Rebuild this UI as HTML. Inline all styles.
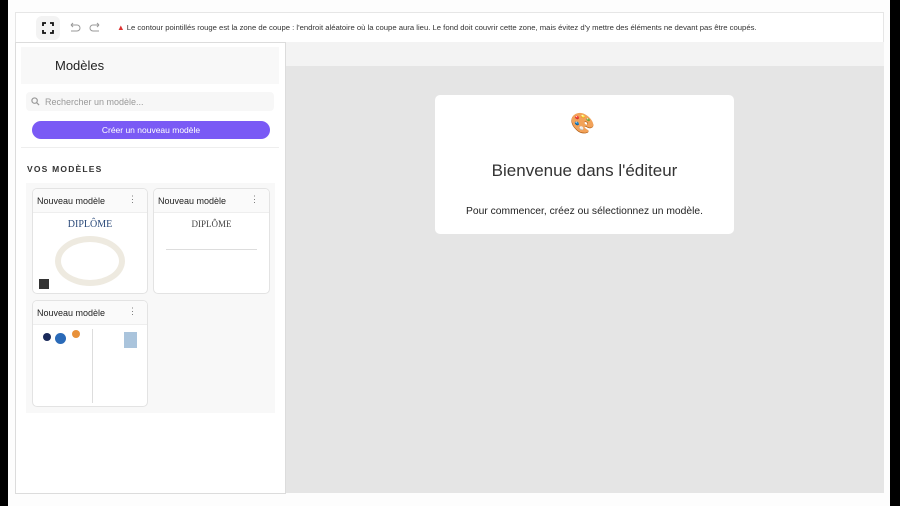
<!DOCTYPE html>
<html><head><meta charset="utf-8"><style>
*{box-sizing:border-box;margin:0;padding:0}
body{width:900px;height:506px;overflow:hidden;background:#fdfdfd;font-family:"Liberation Sans",sans-serif;position:relative;color:#222}
.blk{position:absolute;top:0;bottom:0;background:#000}
.tb{position:absolute;left:15px;top:12px;width:869px;height:31px;border:1px solid #e6e6e6;background:#fff}
.fs{position:absolute;left:20px;top:3px;width:24px;height:24px;background:#f3f3f3;border-radius:6px}
.warn{position:absolute;left:101px;top:10px;font-size:7.7px;color:#333;white-space:nowrap}
.side{position:absolute;left:15px;top:42px;width:271px;height:452px;border:1px solid #dcdcdc;background:#fff}
.main{position:absolute;left:286px;top:42px;width:598px;height:451px;background:#f3f3f3}
.gray{position:absolute;left:286px;top:66px;width:598px;height:427px;background:#e5e5e5}
.card{position:absolute;left:435px;top:95px;width:299px;height:139px;background:#fff;border-radius:5px;text-align:center}
.tile{position:absolute;background:#fff;border:1px solid #e3e3e3;border-radius:5px;overflow:hidden}
.tile .h{height:24px;border-bottom:1px solid #eee;font-size:9px;padding:7px 0 0 4px;position:relative;background:#fafafa}
.tile .h span{position:absolute;right:10px;top:5px;font-size:9px;color:#777}
</style></head><body>
<div class="blk" style="left:0;width:8px"></div>
<div class="blk" style="left:890px;width:10px"></div>
<div class="tb">
 <div class="fs"><svg width="24" height="24" viewBox="0 0 24 24" fill="none" stroke="#111" stroke-width="1.8"><path d="M7 10V7h3M14 7h3v3M17 14v3h-3M10 17H7v-3"/></svg></div>
 <svg style="position:absolute;left:52px;top:9px" width="36" height="12" viewBox="0 0 36 12" fill="none" stroke="#999" stroke-width="1"><path d="M3 3h6a3 3 0 0 1 0 6H3M3 3l2-2M3 3l2 2M31 3h-6a3 3 0 0 0 0 6h6M31 3l-2-2M31 3l-2 2"/></svg>
 <div class="warn"><span style="color:#d33">▲</span> Le contour pointillés rouge est la zone de coupe : l'endroit aléatoire où la coupe aura lieu. Le fond doit couvrir cette zone, mais évitez d'y mettre des éléments ne devant pas être coupés.</div>
</div>
<div class="side">
 <div style="position:absolute;left:5px;top:4px;width:258px;height:37px;background:#f8f8f8"></div>
 <div style="position:absolute;left:39px;top:15px;font-size:13px;color:#222">Modèles</div>
 <div style="position:absolute;left:10px;top:49px;width:248px;height:19px;background:#f7f7f7;border-radius:4px;font-size:9px;color:#999;padding:5px 0 0 19px">Rechercher un modèle...<svg style="position:absolute;left:5px;top:5px" width="9" height="9" viewBox="0 0 10 10" fill="none" stroke="#999" stroke-width="1.3"><circle cx="4" cy="4" r="3"/><path d="M6.3 6.3L9 9"/></svg></div>
 <div style="position:absolute;left:16px;top:78px;width:238px;height:18px;background:#7a5af5;border-radius:9px;color:#fff;font-size:8.5px;text-align:center;line-height:18px">Créer un nouveau modèle</div>
 <div style="position:absolute;left:5px;top:104px;width:258px;border-top:1px solid #eee"></div>
 <div style="position:absolute;left:11px;top:121px;font-size:8.5px;font-weight:bold;letter-spacing:1.2px;color:#333">VOS MODÈLES</div>
 <div style="position:absolute;left:10px;top:140px;width:249px;height:230px;background:#f8f8f8"></div>
 <div class="tile" style="left:16px;top:145px;width:116px;height:106px"><div class="h">Nouveau modèle<span>⋮</span></div>
  <div style="text-align:center;font-family:'Liberation Serif',serif;color:#2b4a7a;font-size:10px;margin-top:6px">DIPLÔME</div>
  <div style="margin:6px auto;width:70px;height:50px;border-radius:50%;border:6px solid #eeeae0"></div>
  <div style="position:absolute;left:6px;top:90px;width:10px;height:10px;background:#333"></div></div>
 <div class="tile" style="left:137px;top:145px;width:117px;height:106px"><div class="h">Nouveau modèle<span>⋮</span></div>
  <div style="text-align:center;font-family:'Liberation Serif',serif;color:#444;font-size:9px;margin-top:6px">DIPLÔME</div>
  <div style="margin:20px 12px 0;border-top:1px solid #ddd"></div></div>
 <div class="tile" style="left:16px;top:257px;width:116px;height:107px"><div class="h">Nouveau modèle<span>⋮</span></div>
  <div style="position:absolute;left:10px;top:32px;width:8px;height:8px;border-radius:50%;background:#1a2a5a"></div>
  <div style="position:absolute;left:22px;top:32px;width:11px;height:11px;border-radius:50%;background:#2a6ab8"></div>
  <div style="position:absolute;left:39px;top:29px;width:8px;height:8px;border-radius:50%;background:#e8913a"></div>
  <div style="position:absolute;left:59px;top:28px;height:74px;border-left:1px solid #ddd"></div>
  <div style="position:absolute;left:91px;top:31px;width:13px;height:16px;background:#aac4dc"></div></div>
</div>
<div class="main"></div>
<div class="gray"></div>
<div class="card">
 <div style="position:absolute;left:135px;top:16px;font-size:20px">🎨</div>
 <div style="position:absolute;left:0;right:0;top:66px;font-size:17px;color:#333">Bienvenue dans l'éditeur</div>
 <div style="position:absolute;left:0;right:0;top:111px;font-size:10.3px;color:#222">Pour commencer, créez ou sélectionnez un modèle.</div>
</div>
</body></html>
